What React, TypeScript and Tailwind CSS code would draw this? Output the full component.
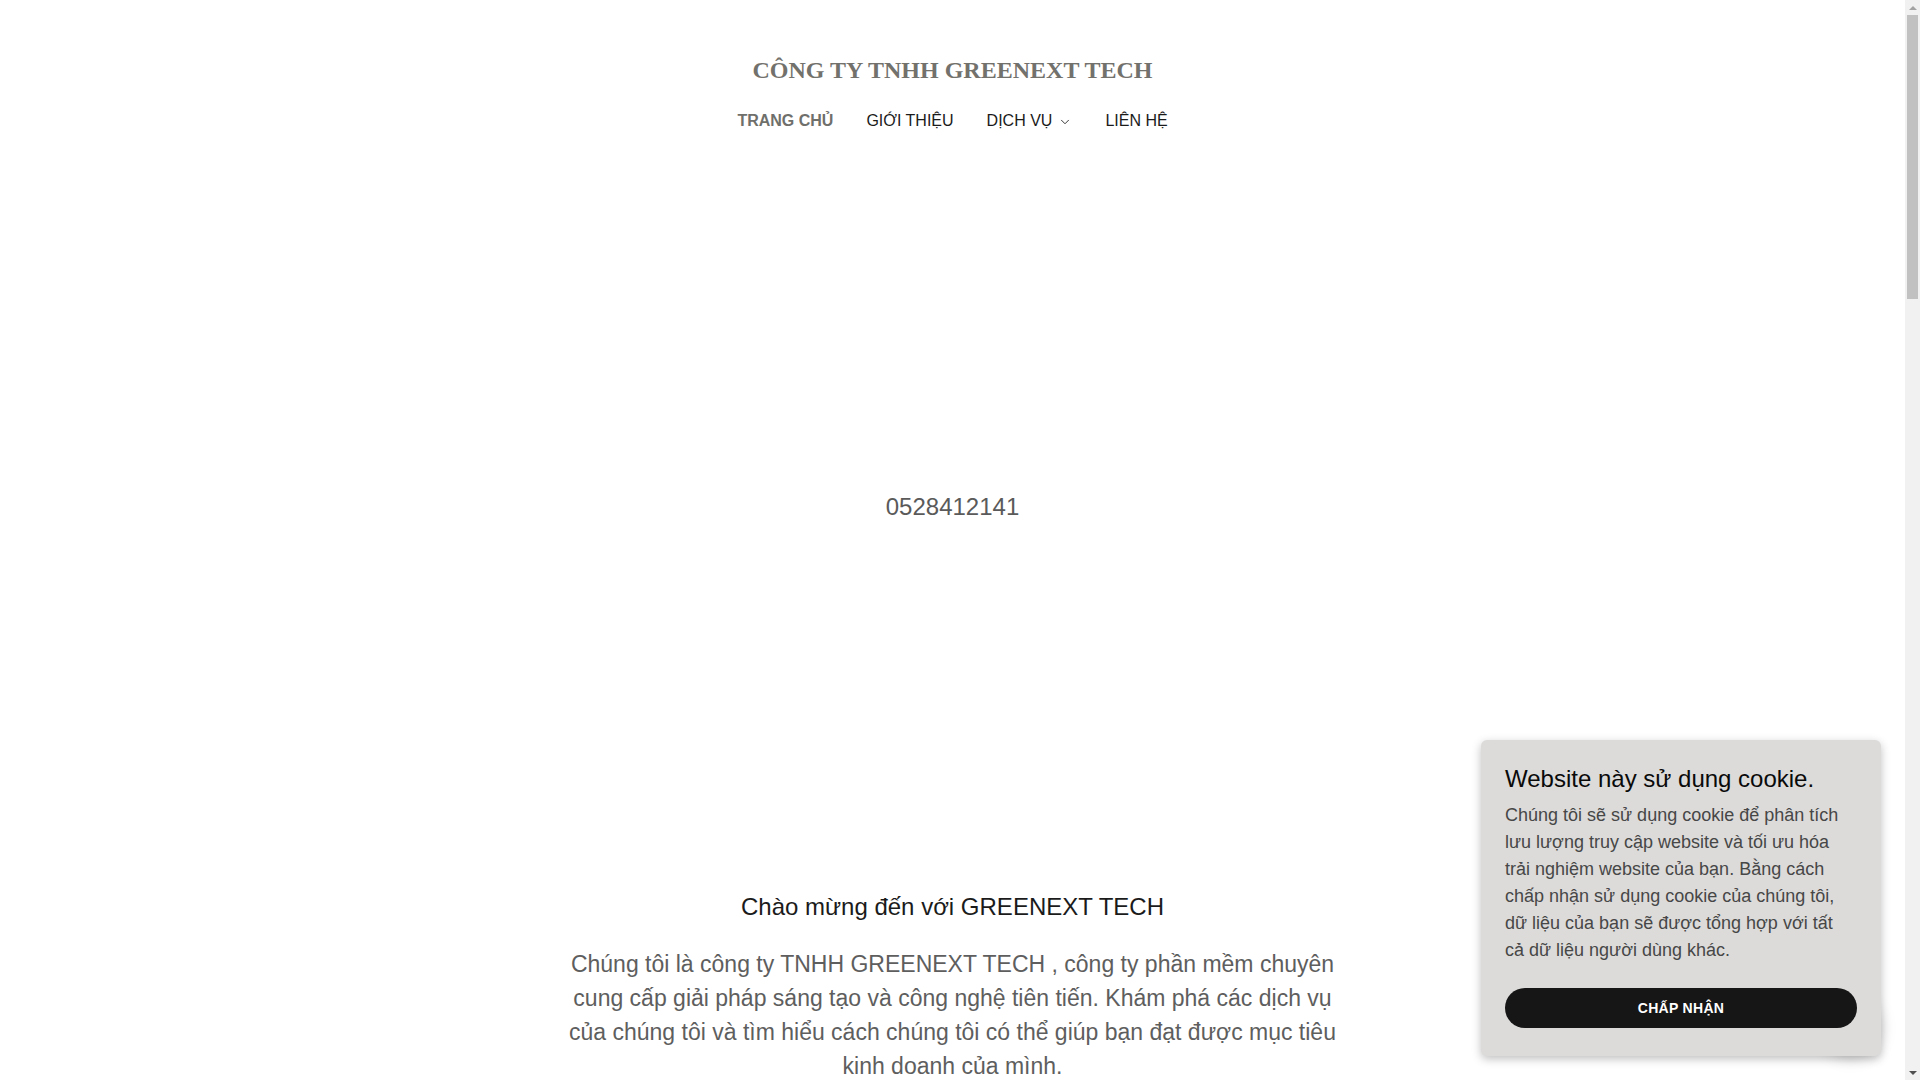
import { ChevronDown } from 'lucide-react'

const NAV = [
  { label: 'TRANG CHỦ', active: true },
  { label: 'GIỚI THIỆU' },
  { label: 'DỊCH VỤ', menu: true },
  { label: 'LIÊN HỆ' },
]

export default function App() {
  return (
    <div className="h-screen w-full flex overflow-hidden bg-white font-['Liberation_Sans',Arial,sans-serif]">
      <main className="relative flex-1 flex flex-col items-center">
        {/* Header */}
        <header className="pt-[55px] flex flex-col items-center">
          <h1 className="font-['Liberation_Serif','Times_New_Roman',serif] font-bold text-[24px] leading-[30px] text-[#72716c]">
            CÔNG TY TNHH GREENEXT TECH
          </h1>
          <nav className="mt-[24px] flex items-center gap-[33px] text-[16px] leading-[24px]">
            {NAV.map((item) => (
              <a
                key={item.label}
                href="#"
                className={
                  item.active
                    ? 'font-bold text-[#6f6f6b]'
                    : 'flex items-center gap-[6px] text-[#1b1b1b]'
                }
              >
                {item.label}
                {item.menu && <ChevronDown size={14} strokeWidth={1.5} className="mt-[1px]" />}
              </a>
            ))}
          </nav>
        </header>

        {/* Hero */}
        <section className="mt-[358px] text-[24px] leading-[32px] text-[#5a5a5a]">0528412141</section>

        {/* About */}
        <section className="mt-[368px] flex flex-col items-center text-center">
          <h2 className="text-[24px] leading-[32px] text-[#1b1b1b]">Chào mừng đến với GREENEXT TECH</h2>
          <p className="mt-[24px] text-[23px] leading-[34px] text-[#5e5e5e]">
            Chúng tôi là công ty TNHH GREENEXT TECH , công ty phần mềm chuyên
            <br />
            cung cấp giải pháp sáng tạo và công nghệ tiên tiến. Khám phá các dịch vụ
            <br />
            của chúng tôi và tìm hiểu cách chúng tôi có thể giúp bạn đạt được mục tiêu
            <br />
            kinh doanh của mình.
          </p>
        </section>

        {/* chat button sitting behind the cookie card */}
        <div className="absolute right-[26px] bottom-[30px] w-[56px] h-[56px] rounded-full bg-white shadow-[0_6px_18px_rgba(0,0,0,0.22)]" />

        {/* Cookie notice */}
        <div className="absolute right-[24px] bottom-[24px] w-[400px] rounded-[6px] bg-[#dcdbda] px-[24px] pt-[24px] pb-[28px] shadow-[0_3px_10px_rgba(0,0,0,0.25)]">
          <h3 className="text-[24px] leading-[30px] text-[#0a0a0a]">Website này sử dụng cookie.</h3>
          <p className="mt-[8px] pr-[10px] text-[18px] leading-[27px] text-[#474747]">
            Chúng tôi sẽ sử dụng cookie để phân tích lưu lượng truy cập website và tối ưu hóa trải nghiệm website
            của bạn. Bằng cách chấp nhận sử dụng cookie của chúng tôi, dữ liệu của bạn sẽ được tổng hợp với tất
            cả dữ liệu người dùng khác.
          </p>
          <button
            type="button"
            className="mt-[24px] w-full h-[40px] rounded-full bg-[#161616] text-white text-[14px] font-bold tracking-[0.3px]"
          >
            CHẤP NHẬN
          </button>
        </div>
      </main>

      <Scrollbar />
    </div>
  )
}

function Scrollbar() {
  return (
    <div className="w-[15px] h-full flex flex-col bg-[#f1f1f1]">
      <div className="h-[15px] flex items-center justify-center">
        <div className="w-0 h-0 border-x-[4px] border-x-transparent border-b-[4px] border-b-[#a3a3a3]" />
      </div>
      <div className="h-[284px] px-[2px]">
        <div className="h-full bg-[#c1c1c1]" />
      </div>
      <div className="flex-1" />
      <div className="h-[15px] flex items-center justify-center">
        <div className="w-0 h-0 border-x-[4px] border-x-transparent border-t-[4px] border-t-[#505050]" />
      </div>
    </div>
  )
}
